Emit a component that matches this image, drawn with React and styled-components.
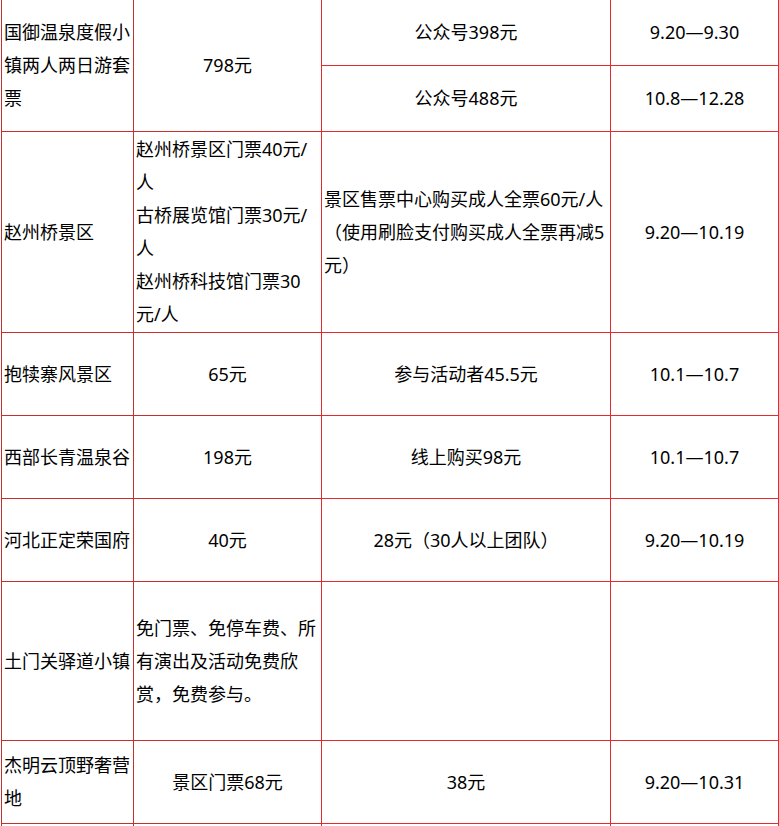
import React from "react";
import styled, { createGlobalStyle } from "styled-components";

const Global = createGlobalStyle`
  html, body { margin: 0; padding: 0; background: #fff; }
  body {
    font-family: "Noto Sans", "Noto Sans CJK SC", sans-serif;
    color: #000;
    overflow: hidden;
  }
`;

const DARK = "#c5302e";
const BRIGHT = "#e42a2a";

const Grid = styled.div`
  display: grid;
  grid-template-columns: 132px 188px 289px 168px;
  grid-template-rows: 66px 66px 201px 83px 83px 83px 159px 83px 83px;
  margin: -1px 0 0 1px;
  width: 777px;
  border-left: 1px solid ${DARK};
  border-top: 1px solid ${DARK};
  font-size: 18px;
  line-height: 33px;
`;

const Cell = styled.div`
  box-sizing: border-box;
  display: flex;
  align-items: center;
  justify-content: ${(p) => (p.$align === "left" ? "flex-start" : "center")};
  text-align: ${(p) => p.$align || "center"};
  padding: 0 2px;
  border-bottom: 1px solid ${(p) => p.$line || BRIGHT};
  border-right: 1px solid ${(p) => p.$edge || p.$line || BRIGHT};
  grid-row: ${(p) => (p.$span ? `span ${p.$span}` : "auto")};
  overflow: hidden;
  word-break: normal;
`;

const Name = (props) => <Cell $align="left" $line={DARK} {...props} />;
const Price = (props) => <Cell $line={DARK} $edge={BRIGHT} {...props} />;

const rows = [
  ["抱犊寨风景区", "65元", "参与活动者45.5元", "10.1—10.7"],
  ["西部长青温泉谷", "198元", "线上购买98元", "10.1—10.7"],
  ["河北正定荣国府", "40元", "28元（30人以上团队）", "9.20—10.19"],
];

export default function App() {
  return (
    <>
      <Global />
      <Grid>
        <Name $span={2}>国御温泉度假小镇两人两日游套票</Name>
        <Price $span={2}>798元</Price>
        <Cell>公众号398元</Cell>
        <Cell>9.20—9.30</Cell>
        <Cell>公众号488元</Cell>
        <Cell>10.8—12.28</Cell>

        <Name>赵州桥景区</Name>
        <Price $align="left">
          赵州桥景区门票40元/人
          <br />
          古桥展览馆门票30元/人
          <br />
          赵州桥科技馆门票30元/人
        </Price>
        <Cell $align="left">
          景区售票中心购买成人全票60元/人（使用刷脸支付购买成人全票再减5元）
        </Cell>
        <Cell>9.20—10.19</Cell>

        {rows.map((r) => (
          <React.Fragment key={r[0]}>
            <Name>{r[0]}</Name>
            <Price>{r[1]}</Price>
            <Cell>{r[2]}</Cell>
            <Cell>{r[3]}</Cell>
          </React.Fragment>
        ))}

        <Name>土门关驿道小镇</Name>
        <Price $align="left">免门票、免停车费、所有演出及活动免费欣赏，免费参与。</Price>
        <Cell />
        <Cell />

        <Name>杰明云顶野奢营地</Name>
        <Price>景区门票68元</Price>
        <Cell>38元</Cell>
        <Cell>9.20—10.31</Cell>

        <Name />
        <Price />
        <Cell />
        <Cell />
      </Grid>
    </>
  );
}
